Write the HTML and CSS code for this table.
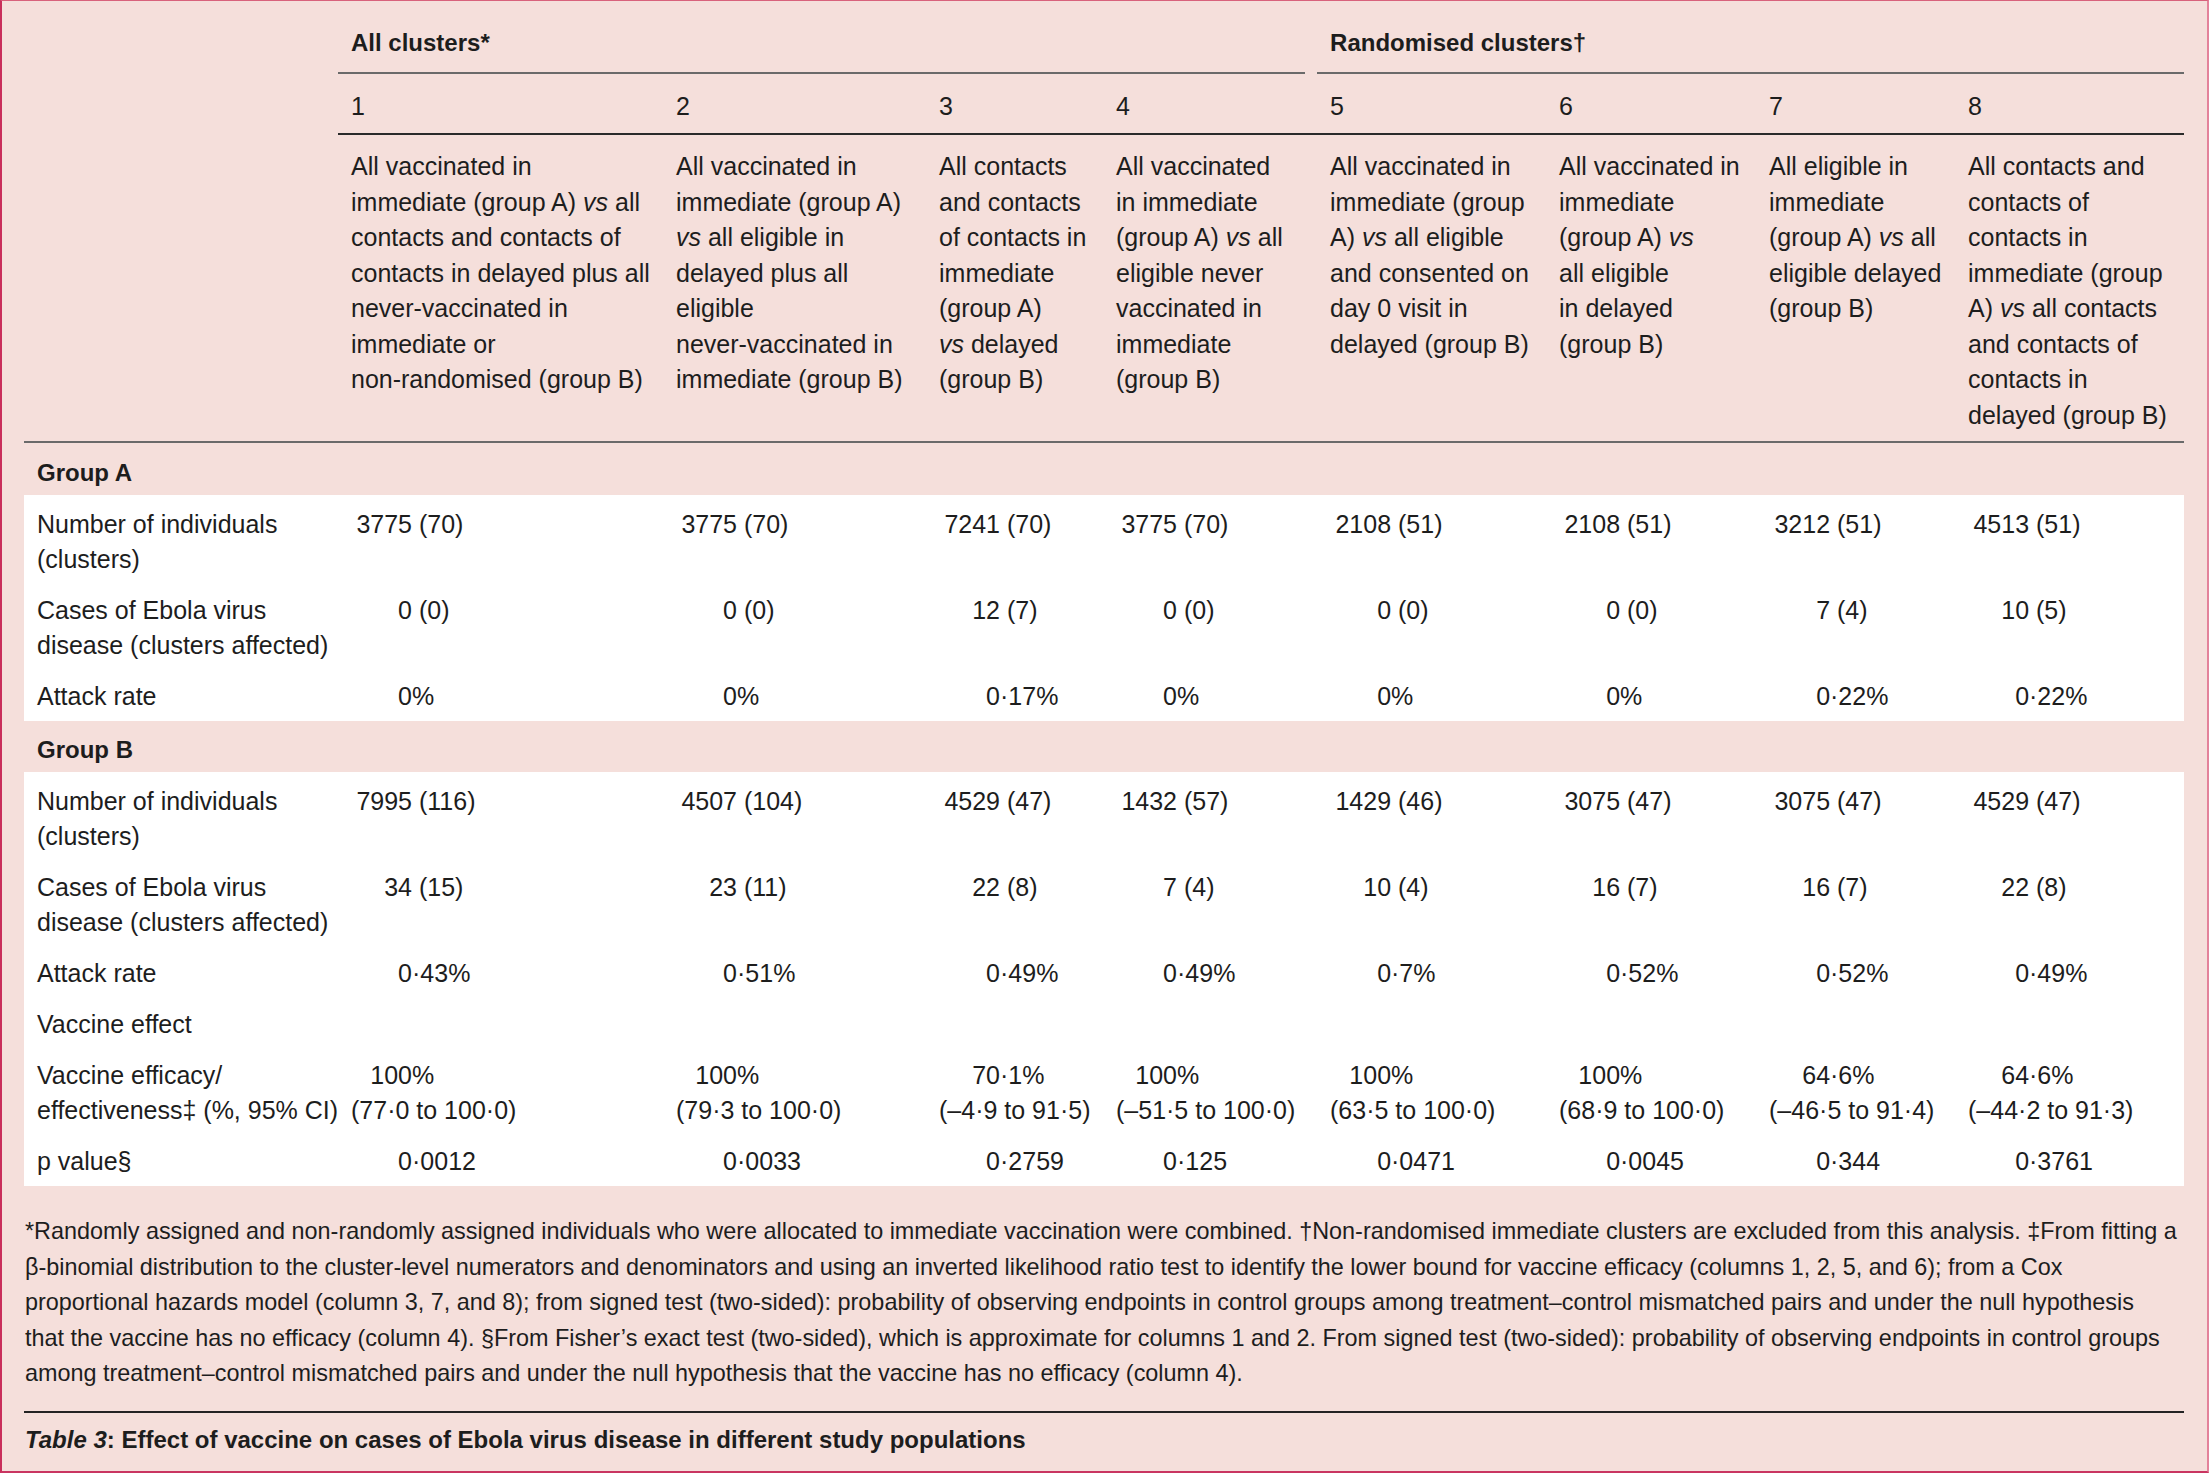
FILE: index.html
```html
<!DOCTYPE html>
<html lang="en">
<head>
<meta charset="utf-8">
<title>Table 3: Effect of vaccine on cases of Ebola virus disease</title>
<link rel="stylesheet" href="styles.css">
</head>
<body>
<div class="sheet">
  <table class="results">
    <colgroup>
      <col class="c-label">
      <col class="c1"><col class="c2"><col class="c3"><col class="c4">
      <col class="c5"><col class="c6"><col class="c7"><col class="c8">
    </colgroup>
    <thead>
      <tr>
        <th class="corner" rowspan="3"></th>
        <th class="group" colspan="4"><div class="group-title gap">All clusters*</div></th>
        <th class="group" colspan="4"><div class="group-title">Randomised clusters†</div></th>
      </tr>
      <tr>
        <th class="colnum">1</th><th class="colnum">2</th><th class="colnum">3</th><th class="colnum">4</th>
        <th class="colnum">5</th><th class="colnum">6</th><th class="colnum">7</th><th class="colnum">8</th>
      </tr>
      <tr>
        <th class="desc">All vaccinated in<br>immediate (group A) <i>vs</i> all<br>contacts and contacts of<br>contacts in delayed plus all<br>never-vaccinated in<br>immediate or<br>non-randomised (group B)</th>
        <th class="desc">All vaccinated in<br>immediate (group A)<br><i>vs</i> all eligible in<br>delayed plus all<br>eligible<br>never-vaccinated in<br>immediate (group B)</th>
        <th class="desc">All contacts<br>and contacts<br>of contacts in<br>immediate<br>(group A)<br><i>vs</i> delayed<br>(group B)</th>
        <th class="desc">All vaccinated<br>in immediate<br>(group A) <i>vs</i> all<br>eligible never<br>vaccinated in<br>immediate<br>(group B)</th>
        <th class="desc">All vaccinated in<br>immediate (group<br>A) <i>vs</i> all eligible<br>and consented on<br>day 0 visit in<br>delayed (group B)</th>
        <th class="desc">All vaccinated in<br>immediate<br>(group A) <i>vs</i><br>all eligible<br>in delayed<br>(group B)</th>
        <th class="desc">All eligible in<br>immediate<br>(group A) <i>vs</i> all<br>eligible delayed<br>(group B)</th>
        <th class="desc">All contacts and<br>contacts of<br>contacts in<br>immediate (group<br>A) <i>vs</i> all contacts<br>and contacts of<br>contacts in<br>delayed (group B)</th>
      </tr>
    </thead>
    <tbody>
      <tr class="grp-row"><td class="grp" colspan="9">Group A</td></tr>
      <tr class="row first">
        <td class="label">Number of individuals<br>(clusters)</td>
        <td><span class="int">3775</span> (70)</td>
        <td><span class="int">3775</span> (70)</td>
        <td><span class="int">7241</span> (70)</td>
        <td><span class="int">3775</span> (70)</td>
        <td><span class="int">2108</span> (51)</td>
        <td><span class="int">2108</span> (51)</td>
        <td><span class="int">3212</span> (51)</td>
        <td><span class="int">4513</span> (51)</td>
      </tr>
      <tr class="row">
        <td class="label">Cases of Ebola virus<br>disease (clusters affected)</td>
        <td><span class="int">0</span> (0)</td>
        <td><span class="int">0</span> (0)</td>
        <td><span class="int">12</span> (7)</td>
        <td><span class="int">0</span> (0)</td>
        <td><span class="int">0</span> (0)</td>
        <td><span class="int">0</span> (0)</td>
        <td><span class="int">7</span> (4)</td>
        <td><span class="int">10</span> (5)</td>
      </tr>
      <tr class="row last">
        <td class="label">Attack rate</td>
        <td><span class="int">0</span>%</td>
        <td><span class="int">0</span>%</td>
        <td><span class="int">0</span>·17%</td>
        <td><span class="int">0</span>%</td>
        <td><span class="int">0</span>%</td>
        <td><span class="int">0</span>%</td>
        <td><span class="int">0</span>·22%</td>
        <td><span class="int">0</span>·22%</td>
      </tr>
      <tr class="grp-row"><td class="grp" colspan="9">Group B</td></tr>
      <tr class="row first">
        <td class="label">Number of individuals<br>(clusters)</td>
        <td><span class="int">7995</span> (116)</td>
        <td><span class="int">4507</span> (104)</td>
        <td><span class="int">4529</span> (47)</td>
        <td><span class="int">1432</span> (57)</td>
        <td><span class="int">1429</span> (46)</td>
        <td><span class="int">3075</span> (47)</td>
        <td><span class="int">3075</span> (47)</td>
        <td><span class="int">4529</span> (47)</td>
      </tr>
      <tr class="row">
        <td class="label">Cases of Ebola virus<br>disease (clusters affected)</td>
        <td><span class="int">34</span> (15)</td>
        <td><span class="int">23</span> (11)</td>
        <td><span class="int">22</span> (8)</td>
        <td><span class="int">7</span> (4)</td>
        <td><span class="int">10</span> (4)</td>
        <td><span class="int">16</span> (7)</td>
        <td><span class="int">16</span> (7)</td>
        <td><span class="int">22</span> (8)</td>
      </tr>
      <tr class="row">
        <td class="label">Attack rate</td>
        <td><span class="int">0</span>·43%</td>
        <td><span class="int">0</span>·51%</td>
        <td><span class="int">0</span>·49%</td>
        <td><span class="int">0</span>·49%</td>
        <td><span class="int">0</span>·7%</td>
        <td><span class="int">0</span>·52%</td>
        <td><span class="int">0</span>·52%</td>
        <td><span class="int">0</span>·49%</td>
      </tr>
      <tr class="row">
        <td class="label">Vaccine effect</td>
        <td></td><td></td><td></td><td></td><td></td><td></td><td></td><td></td>
      </tr>
      <tr class="row">
        <td class="label">Vaccine efficacy/<br>effectiveness‡ (%, 95% CI)</td>
        <td><span class="int">100</span>%<br>(77·0 to 100·0)</td>
        <td><span class="int">100</span>%<br>(79·3 to 100·0)</td>
        <td><span class="int">70</span>·1%<br>(–4·9 to 91·5)</td>
        <td><span class="int">100</span>%<br>(–51·5 to 100·0)</td>
        <td><span class="int">100</span>%<br>(63·5 to 100·0)</td>
        <td><span class="int">100</span>%<br>(68·9 to 100·0)</td>
        <td><span class="int">64</span>·6%<br>(–46·5 to 91·4)</td>
        <td><span class="int">64</span>·6%<br>(–44·2 to 91·3)</td>
      </tr>
      <tr class="row last">
        <td class="label">p value§</td>
        <td><span class="int">0</span>·0012</td>
        <td><span class="int">0</span>·0033</td>
        <td><span class="int">0</span>·2759</td>
        <td><span class="int">0</span>·125</td>
        <td><span class="int">0</span>·0471</td>
        <td><span class="int">0</span>·0045</td>
        <td><span class="int">0</span>·344</td>
        <td><span class="int">0</span>·3761</td>
      </tr>
    </tbody>
  </table>

  <p class="notes">*Randomly assigned and non-randomly assigned individuals who were allocated to immediate vaccination were combined. †Non-randomised immediate clusters are excluded from this analysis. ‡From fitting a<br>β-binomial distribution to the cluster-level numerators and denominators and using an inverted likelihood ratio test to identify the lower bound for vaccine efficacy (columns 1, 2, 5, and 6); from a Cox<br>proportional hazards model (column 3, 7, and 8); from signed test (two-sided): probability of observing endpoints in control groups among treatment–control mismatched pairs and under the null hypothesis<br>that the vaccine has no efficacy (column 4). §From Fisher’s exact test (two-sided), which is approximate for columns 1 and 2. From signed test (two-sided): probability of observing endpoints in control groups<br>among treatment–control mismatched pairs and under the null hypothesis that the vaccine has no efficacy (column 4).</p>

  <p class="caption"><em>Table 3</em>: Effect of vaccine on cases of Ebola virus disease in different study populations</p>
</div>
</body>
</html>
```
FILE: styles.css
```css
* {
  box-sizing: border-box;
}

html,
body {
  margin: 0;
  padding: 0;
}

body {
  background: #f5dfdb;
  color: #1d1d1d;
  font-family: "Liberation Sans", Arial, sans-serif;
}

.sheet {
  width: 2209px;
  height: 1473px;
  background: #f5dfdb;
  border-top: 1px solid #d8627c;
  border-left: 2px solid #c92f5b;
  border-right: 2px solid #e3829a;
  border-bottom: 2px solid #c93561;
  padding: 0 23px 0 22px;
  overflow: hidden;
}

/* ---------- table ---------- */
.results {
  width: 2160px;
  table-layout: fixed;
  border-collapse: separate;
  border-spacing: 0;
  font-size: 25px;
  line-height: 35px;
}

.c-label { width: 314px; }
.c1 { width: 325px; }
.c2 { width: 263px; }
.c3 { width: 177px; }
.c4 { width: 214px; }
.c5 { width: 229px; }
.c6 { width: 210px; }
.c7 { width: 199px; }
.c8 { width: 229px; }

.results th,
.results td {
  padding: 8px 0 8px 13px;
  text-align: left;
  vertical-align: top;
  font-weight: normal;
  white-space: nowrap;
}

.results i {
  font-style: italic;
}

/* header */
.results th.corner {
  padding: 0;
  border-bottom: 2px solid #6a6a6a;
}

.results th.group {
  padding: 0;
}

.group-title {
  font-weight: bold;
  font-size: 24px;
  line-height: 35px;
  padding: 24px 0 12px 13px;
  border-bottom: 2px solid #6a6a6a;
}

.group-title.gap {
  margin-right: 12px;
}

.results th.colnum {
  padding: 15px 0 9px 13px;
  border-bottom: 2px solid #2a2a2a;
}

.results th.desc {
  padding: 14px 0 8px 13px;
  line-height: 35.5px;
  border-bottom: 2px solid #6a6a6a;
}

/* body */
.results td.grp {
  font-weight: bold;
  font-size: 24px;
  padding: 11.5px 0 5px 13px;
}

.row td {
  background: #ffffff;
}

.row.first td {
  padding-top: 12px;
}

.row.last td {
  padding-bottom: 7px;
}

.int {
  display: inline-block;
  width: 61px;
  text-align: right;
}

/* footnotes & caption */
.notes {
  margin: 0;
  padding: 28px 0 19px 1px;
  font-size: 23.4px;
  line-height: 35.5px;
  white-space: nowrap;
  border-bottom: 2px solid #232323;
}

.caption {
  margin: 0;
  padding: 9px 0 0 1px;
  font-size: 24px;
  line-height: 35px;
  font-weight: bold;
}

.caption em {
  font-style: italic;
}
```
